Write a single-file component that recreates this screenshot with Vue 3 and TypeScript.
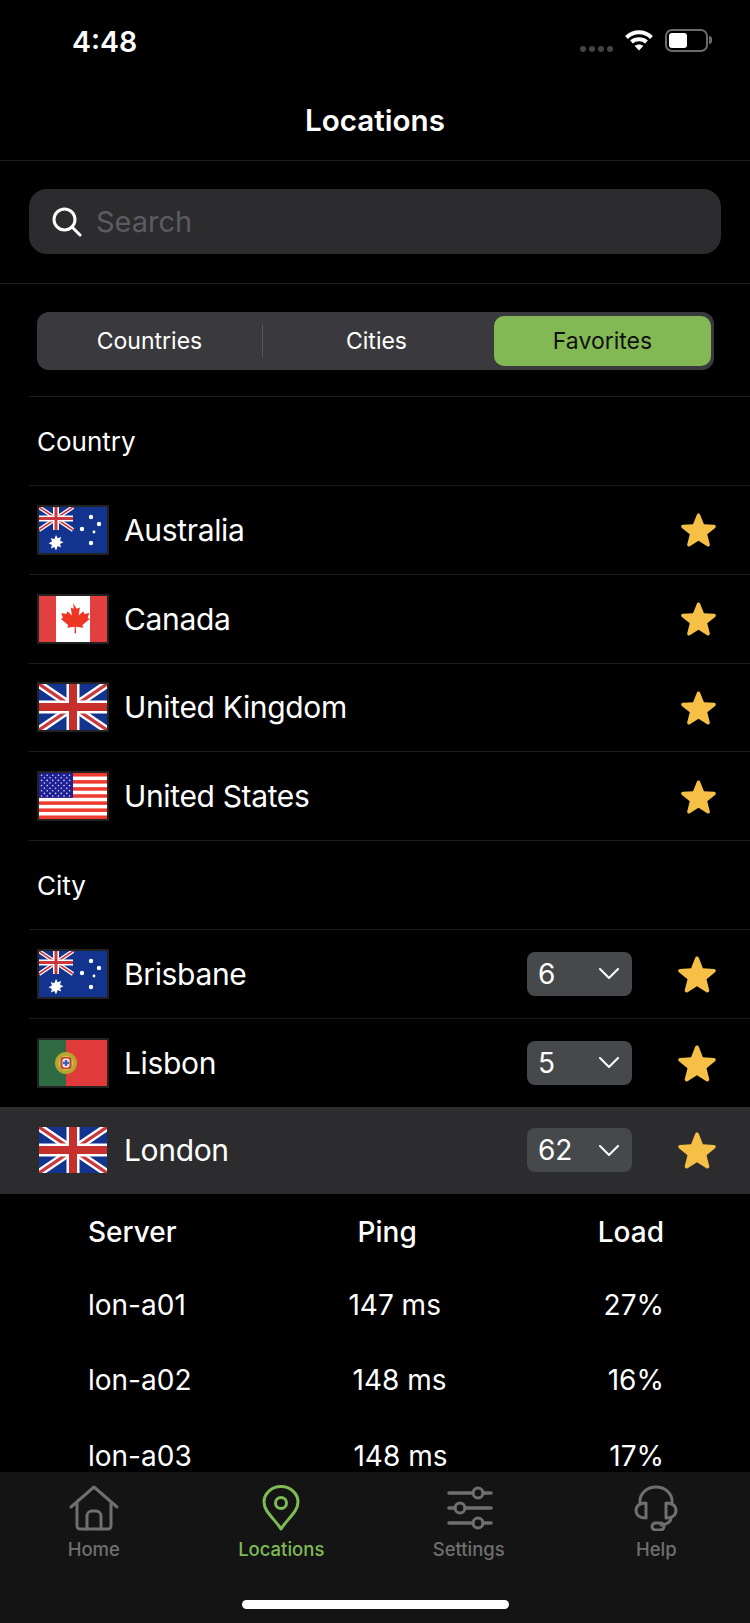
<script setup lang="ts">
type Row = { name: string; flag: string; count?: string }
const countries: Row[] = [
  { name: 'Australia', flag: 'au' },
  { name: 'Canada', flag: 'ca' },
  { name: 'United Kingdom', flag: 'gb' },
  { name: 'United States', flag: 'us' },
]
const cities: Row[] = [
  { name: 'Brisbane', flag: 'au', count: '6' },
  { name: 'Lisbon', flag: 'pt', count: '5' },
]
const servers = [
  { name: 'lon-a01', ping: '147 ms', load: '27%' },
  { name: 'lon-a02', ping: '148 ms', load: '16%' },
  { name: 'lon-a03', ping: '148 ms', load: '17%' },
]
const usStars: { x: number; y: number }[] = []
for (let r = 0; r < 9; r++) {
  for (let c = 0; c < (r % 2 ? 5 : 6); c++) {
    usStars.push({ x: 2.6 + c * 5.6 + (r % 2 ? 2.8 : 0), y: 2.2 + r * 2.6 })
  }
}
const usStripes = [0, 1, 2, 3, 4, 5, 6].map((i) => i * 7.08)
const auStars = [
  { x: 52, y: 10, r: 2.2 },
  { x: 60, y: 17, r: 2.2 },
  { x: 43, y: 22, r: 2.2 },
  { x: 55, y: 25, r: 1.4 },
  { x: 52, y: 36, r: 2.2 },
]
</script>

<template>
  <div class="phone">
    <svg class="defs" width="0" height="0" aria-hidden="true">
      <defs>
        <symbol id="flag-au" viewBox="0 0 68 46" preserveAspectRatio="none">
          <rect width="68" height="46" fill="#12348f" />
          <path d="M0 0L34 23M34 0L0 23" stroke="#fff" stroke-width="4" />
          <path d="M0 0L34 23M34 0L0 23" stroke="#c8383e" stroke-width="1.6" />
          <path d="M17 0V23M0 11.500H34" stroke="#fff" stroke-width="6" />
          <path d="M17 0V23M0 11.500H34" stroke="#c8383e" stroke-width="3" />
          <path d="M17 28l1.700 3.300 3.500-1.300-1.200 3.500 3.400 1.700-3.400 1.700 1.200 3.500-3.500-1.300L17 43.400l-1.700-3.300-3.500 1.300 1.200-3.500-3.400-1.700 3.400-1.700-1.200-3.500 3.500 1.300z" fill="#fff" />
          <circle v-for="s in auStars" :key="s.x" :cx="s.x" :cy="s.y" :r="s.r" fill="#fff" />
        </symbol>
        <symbol id="flag-ca" viewBox="0 0 68 46" preserveAspectRatio="none">
          <rect width="68" height="46" fill="#fff" />
          <rect width="17" height="46" fill="#e2403f" />
          <rect x="51" width="17" height="46" fill="#e2403f" />
          <path transform="translate(34 7) scale(1.15 1.06) translate(-34 -7)" d="M34 7l3.200 5.500 2.800-1.300-1.100 7.500 4-4 1 2.600 4.200-.8-1.300 4.600 1.800 1-6.400 5.600.8 2.600-6.500-.9.200 6.200h-1.400l.2-6.200-6.500.9.800-2.600-6.400-5.600 1.800-1-1.300-4.600 4.200.8 1-2.600 4 4-1.100-7.500 2.800 1.300z" fill="#ee3524" />
        </symbol>
        <symbol id="flag-gb" viewBox="0 0 68 46" preserveAspectRatio="none">
          <rect width="68" height="46" fill="#12348f" />
          <path d="M0 0L68 46M68 0L0 46" stroke="#fff" stroke-width="8" />
          <path d="M0 0L68 46M68 0L0 46" stroke="#c8383e" stroke-width="3.200" />
          <path d="M34 0V46M0 23H68" stroke="#fff" stroke-width="13" />
          <path d="M34 0V46M0 23H68" stroke="#c62f2c" stroke-width="8" />
        </symbol>
        <symbol id="flag-us" viewBox="0 0 68 46" preserveAspectRatio="none">
          <rect width="68" height="46" fill="#fff" />
          <rect v-for="y in usStripes" :key="y" x="0" :y="y" width="68" height="3.540" fill="#ee3b30" />
          <rect width="34" height="24.800" fill="#1f1f96" />
          <circle v-for="(s, i) in usStars" :key="i" :cx="s.x" :cy="s.y" r="0.800" fill="#dfe3f5" />
        </symbol>
        <symbol id="flag-pt" viewBox="0 0 68 46" preserveAspectRatio="none">
          <rect width="68" height="46" fill="#e03a3a" />
          <rect width="27" height="46" fill="#2f6b42" />
          <circle cx="27" cy="23" r="11" fill="#b4a62e" />
          <circle cx="27" cy="23" r="7.500" fill="#d9b84a" />
          <rect x="21.500" y="17" width="11" height="12" rx="3" fill="#c9402f" />
          <rect x="23.500" y="18.500" width="7" height="9" rx="2" fill="#eceef4" />
          <rect x="25.800" y="20" width="2.400" height="6" fill="#3d5fae" />
          <rect x="24" y="21.800" width="6" height="2.400" fill="#3d5fae" />
        </symbol>
        <symbol id="star" viewBox="0 0 36 36">
          <path d="M18 1.500c.800 0 1.400.5 1.700 1.200l3.900 9.800 10.500.700c1.700.1 2.300 2.200 1 3.200l-8.100 6.600 2.600 10.200c.4 1.600-1.300 2.900-2.700 2l-8.900-5.600-8.900 5.600c-1.400.9-3.100-.4-2.700-2l2.600-10.200-8.100-6.600c-1.300-1-.7-3.100 1-3.200l10.500-.7 3.900-9.800c.3-.7.900-1.200 1.700-1.200z" fill="#f6bf45" />
        </symbol>
      </defs>
    </svg>

    <header class="status">
      <span class="time">4:48</span>
      <div class="status-right">
        <div class="dots"><i></i><i></i><i></i><i></i></div>
        <svg class="wifi" width="30" height="22" viewBox="0 0 30 22">
          <path d="M2.500 8.500C9.500 1.500 20.500 1.500 27.500 8.500" />
          <path d="M7.500 13C11.500 9.300 18.500 9.300 22.500 13" />
          <path class="wifi-dot" d="M15 21.500l-4.300-4.600c2.300-2 6.300-2 8.600 0z" />
        </svg>
        <div class="battery"><div class="battery-fill"></div></div>
        <div class="battery-tip"></div>
      </div>
    </header>

    <div class="nav">Locations</div>

    <div class="search-wrap">
      <div class="search">
        <svg width="30" height="30" viewBox="0 0 30 30" class="search-icon">
          <circle cx="12.500" cy="12.500" r="10.500" />
          <path d="M20 20L28 28" />
        </svg>
        <span>Search</span>
      </div>
    </div>

    <div class="seg-wrap">
      <div class="seg">
        <div class="seg-item">Countries</div>
        <div class="seg-sep"></div>
        <div class="seg-item">Cities</div>
        <div class="seg-item seg-active">Favorites</div>
      </div>
    </div>

    <main class="list">
      <div class="row head">Country</div>
      <div v-for="c in countries" :key="c.name" class="row">
        <div class="flag"><svg width="68" height="46"><use :href="'#flag-' + c.flag" /></svg></div>
        <span class="name">{{ c.name }}</span>
        <svg class="star" width="35" height="35"><use href="#star" /></svg>
      </div>
      <div class="row head">City</div>
      <div v-for="c in cities" :key="c.name" class="row">
        <div class="flag"><svg width="68" height="46"><use :href="'#flag-' + c.flag" /></svg></div>
        <span class="name">{{ c.name }}</span>
        <div class="select">
          <span>{{ c.count }}</span>
          <svg width="20" height="11" viewBox="0 0 20 11"><path d="M1 1l9 9 9-9" /></svg>
        </div>
        <svg class="star" width="38" height="38"><use href="#star" /></svg>
      </div>
      <div class="row open">
        <div class="flag plain"><svg width="68" height="46"><use href="#flag-gb" /></svg></div>
        <span class="name">London</span>
        <div class="select">
          <span>62</span>
          <svg width="20" height="11" viewBox="0 0 20 11"><path d="M1 1l9 9 9-9" /></svg>
        </div>
        <svg class="star" width="38" height="38"><use href="#star" /></svg>
      </div>
      <div class="table">
        <div class="tr th"><span>Server</span><span>Ping</span><span>Load</span></div>
        <div v-for="s in servers" :key="s.name" class="tr">
          <span>{{ s.name }}</span><span>{{ s.ping }}</span><span>{{ s.load }}</span>
        </div>
      </div>
    </main>

    <footer class="tabs">
      <div class="tab-row">
        <div class="tab">
          <svg width="50" height="46" viewBox="0 0 50 46">
            <path d="M2 22L25 2l23 20" />
            <path d="M8 18v23a3 3 0 0 0 3 3h28a3 3 0 0 0 3-3V18" />
            <path d="M18 44V31a5 5 0 0 1 5-5h4a5 5 0 0 1 5 5v13" />
          </svg>
          <span>Home</span>
        </div>
        <div class="tab active">
          <svg width="50" height="46" viewBox="0 0 50 46">
            <path d="M25 44C19 34 8 27 8 17a17 15.500 0 0 1 34 0c0 10-11 17-17 27z" />
            <circle cx="25" cy="18" r="5.500" />
          </svg>
          <span>Locations</span>
        </div>
        <div class="tab">
          <svg width="50" height="46" viewBox="0 0 50 46">
            <path class="thick" d="M5 8H29M39 8H47M5 23H11M21 23H47M5 38H29M39 38H47" />
            <circle cx="34" cy="8" r="5" />
            <circle cx="16" cy="23" r="5" />
            <circle cx="34" cy="38" r="5" />
          </svg>
          <span>Settings</span>
        </div>
        <div class="tab">
          <svg width="50" height="46" viewBox="0 0 50 46">
            <path d="M9 19v-3a16 14 0 0 1 32 0v3" />
            <path d="M15 18c-6 0-10 3-10 7.500s4 7.500 10 7.500zM35 18c6 0 10 3 10 7.500s-4 7.500-10 7.500z" />
            <path d="M40 33c0 4-4 6-10 7" />
            <rect x="21" y="38" width="12" height="7" rx="3.500" />
          </svg>
          <span>Help</span>
        </div>
      </div>
      <div class="home-bar"></div>
    </footer>
  </div>
</template>

<style>
html, body { margin: 0; background: #000; }
</style>

<style scoped>
.phone {
  position: relative;
  width: 750px;
  height: 1623px;
  background: #000;
  color: #fff;
  font-family: Inter, "Liberation Sans", sans-serif;
  display: flex;
  flex-direction: column;
  overflow: hidden;
}
.defs { position: absolute; }
.status {
  height: 80px;
  flex: none;
  display: flex;
  align-items: center;
  justify-content: space-between;
  padding: 0 38px 0 72px;
}
.time { font-size: 28.5px; font-weight: 600; padding-top: 2px; }
.status-right { display: flex; align-items: center; height: 24px; }
.dots { display: flex; gap: 3px; margin: 18px 11px 0 0; }
.dots i { width: 6px; height: 6px; border-radius: 50%; background: #444; display: block; }
.wifi { fill: none; stroke: #fff; stroke-width: 4; margin-right: 11px; }
.wifi-dot { fill: #fff; stroke: none; }
.battery {
  width: 43px;
  height: 23px;
  box-sizing: border-box;
  border: 2px solid #6b6b6b;
  border-radius: 7px;
  padding: 2px;
}
.battery-fill { width: 18px; height: 15px; background: #fff; border-radius: 3px; }
.battery-tip { width: 3px; height: 8px; background: #6b6b6b; border-radius: 0 3px 3px 0; margin-left: 1px; }
.nav {
  height: 81px;
  flex: none;
  box-sizing: border-box;
  border-bottom: 1px solid #1c1c1e;
  display: flex;
  align-items: center;
  justify-content: center;
  font-size: 29.6px;
  font-weight: 600;
}
.search-wrap {
  height: 123px;
  flex: none;
  box-sizing: border-box;
  border-bottom: 1px solid #1c1c1e;
  padding: 28px 29px 0;
}
.search {
  height: 65px;
  background: #2c2c2e;
  border-radius: 18px;
  display: flex;
  align-items: center;
  padding-left: 23px;
  gap: 14px;
  color: #5c5c60;
  font-size: 29px;
}
.search-icon { fill: none; stroke: #fff; stroke-width: 3; stroke-linecap: round; }
.seg-wrap { height: 112px; flex: none; box-sizing: border-box; padding: 28px 36px 0 37px; }
.seg {
  height: 58px;
  background: #3a3a3e;
  border-radius: 12px;
  display: flex;
  align-items: center;
  padding: 0 3px 0 0;
  font-size: 23px;
  font-weight: 400;
}
.seg-item { text-align: center; }
.seg-item:nth-child(1) { width: 225px; }
.seg-item:nth-child(3) { width: 227px; margin-right: 4px; }
.seg-sep { width: 1px; height: 32px; background: #58585c; }
.seg-active {
  width: 217px;
  height: 50px;
  line-height: 50px;
  background: #82b955;
  color: #111;
  border-radius: 10px;
}
.list { flex: 1; min-height: 0; overflow: hidden; }
.row {
  height: 88.85px;
  box-sizing: border-box;
  margin-left: 29px;
  padding: 0 34px 0 8px;
  border-top: 1px solid #1c1c1e;
  display: flex;
  align-items: center;
}
.head { font-size: 26px; padding-top: 1px; }
.flag {
  width: 72px;
  height: 50px;
  box-sizing: border-box;
  border: 2px solid #222;
  flex: none;
  display: flex;
}
.flag.plain { border-color: transparent; }
.name {
  font-size: 30px;
  letter-spacing: -0.35px;
  margin-left: 15px;
  flex: 1;
}
.select {
  width: 105px;
  height: 44px;
  box-sizing: border-box;
  border-radius: 8px;
  background: #46494b;
  display: flex;
  align-items: center;
  justify-content: space-between;
  padding: 0 13px 0 11px;
  font-size: 28px;
  margin-right: 46px;
}
.select svg { fill: none; stroke: #fff; stroke-width: 2; stroke-linecap: round; stroke-linejoin: round; }
.star { flex: none; }
.open {
  margin-left: 0;
  padding-left: 37px;
  height: 87px;
  background: #2c2c2e;
  border-top: none;
}
.table { padding: 9px 86px 0 88px; }
.tr {
  height: 75.5px;
  display: flex;
  align-items: center;
  justify-content: space-between;
  font-size: 28px;
}
.th { height: 58px; margin-bottom: 6px; font-weight: 500; }
.tabs {
  height: 151px;
  flex: none;
  background: #141414;
  position: relative;
}
.tab-row { display: flex; padding-top: 13px; }
.tab {
  width: 25%;
  display: flex;
  flex-direction: column;
  align-items: center;
  color: #6f6f6f;
  font-size: 18.5px;
  font-weight: 500;
  gap: 7px;
}
.tab svg { fill: none; stroke: currentColor; stroke-width: 3; stroke-linejoin: round; stroke-linecap: round; }
.thick { stroke-width: 3.6; }
.active { color: #7fbb55; }
.home-bar {
  position: absolute;
  left: 242px;
  bottom: 14px;
  width: 267px;
  height: 9px;
  border-radius: 5px;
  background: #fff;
}
</style>
